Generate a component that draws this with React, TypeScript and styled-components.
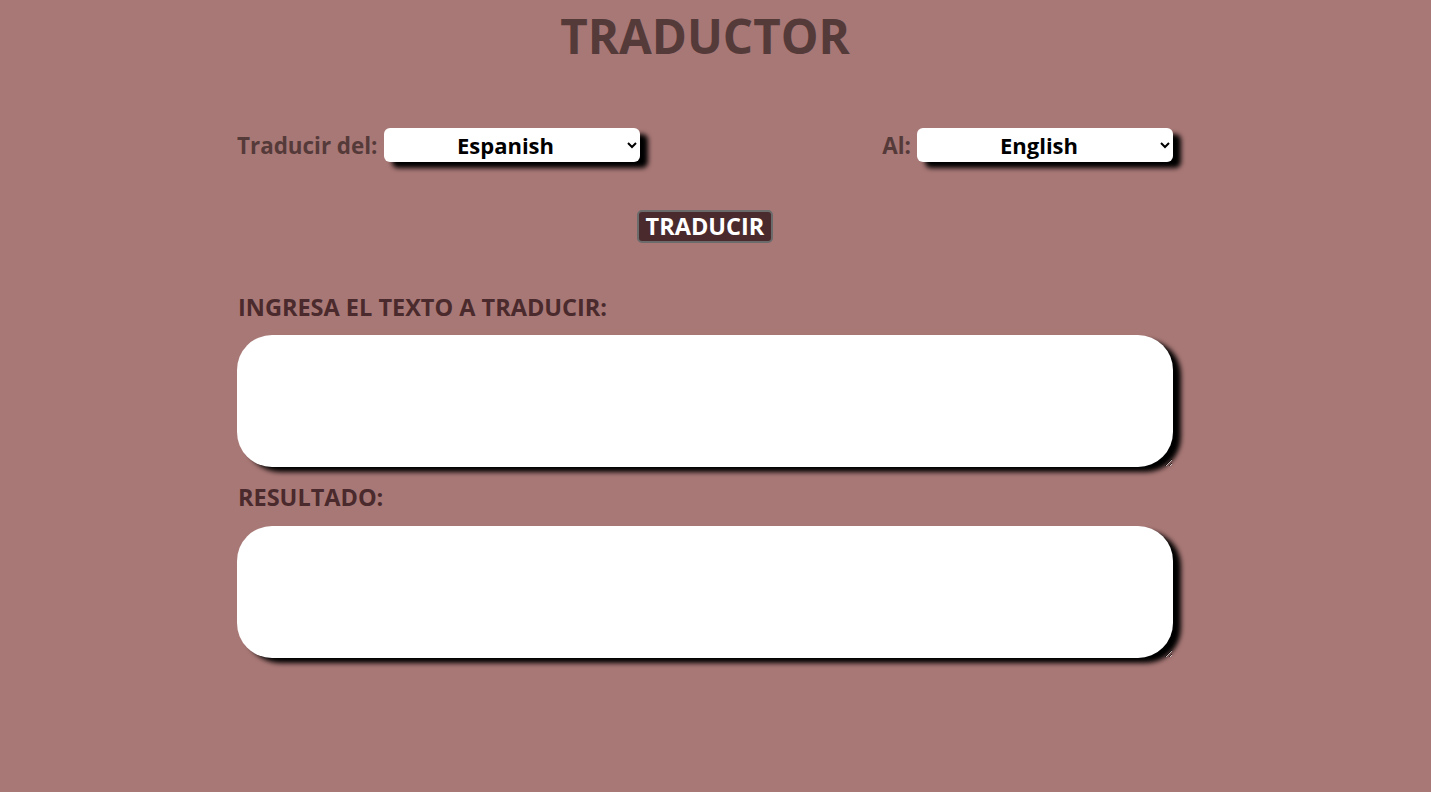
import React from "react";
import styled, { createGlobalStyle } from "styled-components";

const Global = createGlobalStyle`
  html, body { margin: 0; padding: 0; }
  body {
    background: #a87876;
    font-family: "Open Sans", "Noto Sans", sans-serif;
    min-height: 792px;
  }
`;

const Page = styled.main`
  width: 936px;
  margin-left: 237px;
  display: flex;
  flex-direction: column;
`;

const Title = styled.h1`
  margin: 4px 0 0;
  text-align: center;
  font-size: 47.5px;
  font-weight: 700;
  color: #553a3a;
  line-height: 64px;
`;

const LangRow = styled.div`
  display: flex;
  justify-content: space-between;
  align-items: center;
  margin-top: 60px;
`;

const LangGroup = styled.label`
  display: flex;
  align-items: center;
  gap: 6px;
  font-size: 22.4px;
  font-weight: 700;
  color: #553a3a;
`;

const Select = styled.select`
  width: 256px;
  height: 34px;
  border: none;
  border-radius: 6px;
  background: #fff;
  box-shadow: 8px 6px 5px #000;
  font-family: "Open Sans", sans-serif;
  font-size: 22px;
  font-weight: 700;
  text-align: center;
  text-align-last: center;
  color: #000;
  padding: 0;
`;

const ButtonRow = styled.div`
  display: flex;
  justify-content: center;
  margin-top: 48px;
`;

const Button = styled.button`
  background: #4a2a2c;
  color: #fff;
  border: 2px solid #6b6b6b;
  border-radius: 5px;
  font-family: "Open Sans", sans-serif;
  font-size: 23.5px;
  font-weight: 700;
  padding: 0;
  height: 33px;
  width: 136px;
  line-height: 29px;
`;

const SectionLabel = styled.h3`
  margin: 50px 0 14px 1px;
  font-size: 23.5px;
  font-weight: 700;
  color: #4a2a2c;
  line-height: 28px;
`;

const Area = styled.textarea`
  box-sizing: border-box;
  width: 936px;
  height: 132px;
  border: none;
  border-radius: 35px;
  background: #fff;
  box-shadow: 8px 5px 5px #000;
  resize: vertical;
  outline: none;
`;

const ResultLabel = styled(SectionLabel)`
  margin-top: 16px;
  margin-bottom: 15px;
`;

export default function App() {
  return (
    <>
      <Global />
      <Page>
        <Title>TRADUCTOR</Title>
        <LangRow>
          <LangGroup>
            Traducir del:
            <Select defaultValue="es">
              <option value="es">Espanish</option>
              <option value="en">English</option>
            </Select>
          </LangGroup>
          <LangGroup>
            Al:
            <Select defaultValue="en">
              <option value="es">Espanish</option>
              <option value="en">English</option>
            </Select>
          </LangGroup>
        </LangRow>
        <ButtonRow>
          <Button>TRADUCIR</Button>
        </ButtonRow>
        <SectionLabel>INGRESA EL TEXTO A TRADUCIR:</SectionLabel>
        <Area />
        <ResultLabel>RESULTADO:</ResultLabel>
        <Area />
      </Page>
    </>
  );
}
